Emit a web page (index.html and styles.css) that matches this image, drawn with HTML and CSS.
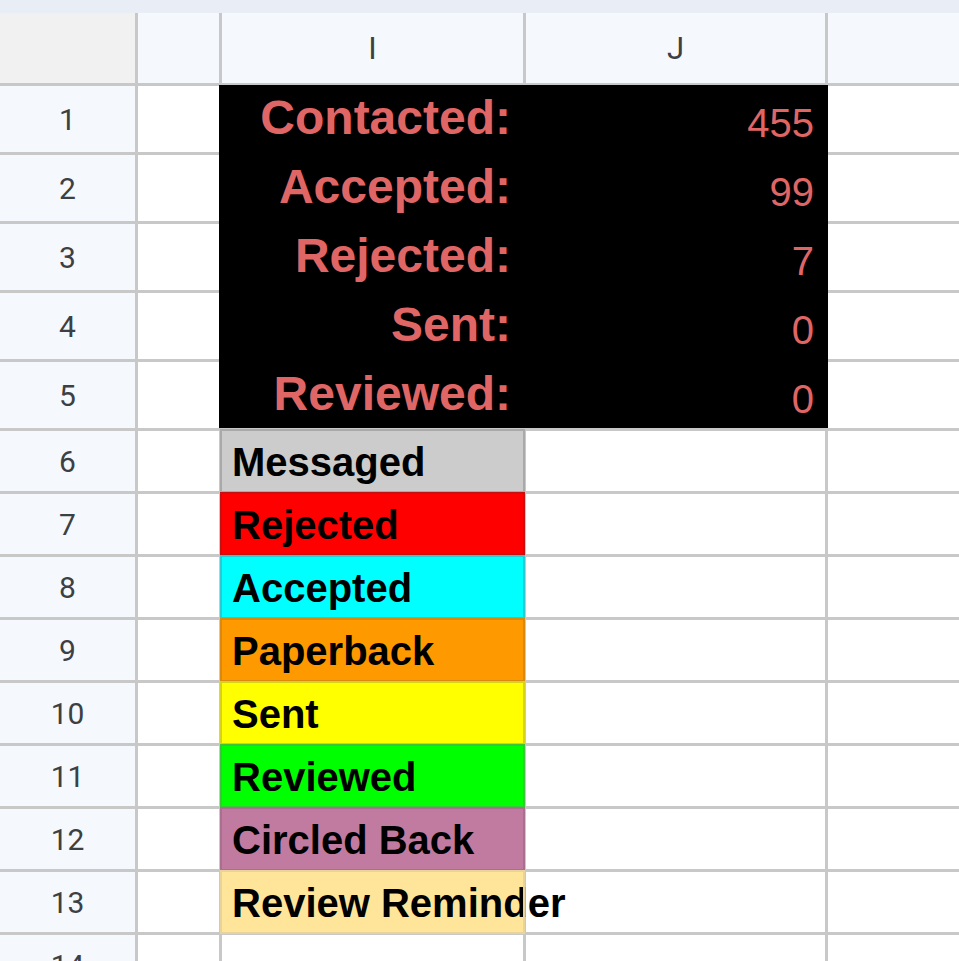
FILE: index.html
```html
<!DOCTYPE html>
<html>
<head>
<meta charset="utf-8">
<link rel="stylesheet" href="styles.css">
</head>
<body>
<div class="topbar"></div>
<div class="sheet">
  <div class="corner"></div>
  <div class="colhdr"></div>
  <div class="colhdr">I</div>
  <div class="colhdr">J</div>
  <div class="colhdr"></div>

  <div class="stats">
    <div class="label">Contacted:</div><div class="num">455</div>
    <div class="label">Accepted:</div><div class="num">99</div>
    <div class="label">Rejected:</div><div class="num">7</div>
    <div class="label">Sent:</div><div class="num">0</div>
    <div class="label">Reviewed:</div><div class="num">0</div>
  </div>

  <div class="rowhdr">1</div><div class="cell"></div><div class="cell"></div>
  <div class="rowhdr">2</div><div class="cell"></div><div class="cell"></div>
  <div class="rowhdr">3</div><div class="cell"></div><div class="cell"></div>
  <div class="rowhdr">4</div><div class="cell"></div><div class="cell"></div>
  <div class="rowhdr">5</div><div class="cell"></div><div class="cell"></div>

  <div class="rowhdr">6</div><div class="cell"></div><div class="tag tag-messaged">Messaged</div><div class="cell"></div><div class="cell"></div>
  <div class="rowhdr">7</div><div class="cell"></div><div class="tag tag-rejected">Rejected</div><div class="cell"></div><div class="cell"></div>
  <div class="rowhdr">8</div><div class="cell"></div><div class="tag tag-accepted">Accepted</div><div class="cell"></div><div class="cell"></div>
  <div class="rowhdr">9</div><div class="cell"></div><div class="tag tag-paperback">Paperback</div><div class="cell"></div><div class="cell"></div>
  <div class="rowhdr">10</div><div class="cell"></div><div class="tag tag-sent">Sent</div><div class="cell"></div><div class="cell"></div>
  <div class="rowhdr">11</div><div class="cell"></div><div class="tag tag-reviewed">Reviewed</div><div class="cell"></div><div class="cell"></div>
  <div class="rowhdr">12</div><div class="cell"></div><div class="tag tag-circled">Circled Back</div><div class="cell"></div><div class="cell"></div>
  <div class="rowhdr">13</div><div class="cell"></div><div class="tag tag-reminder">Review Reminder</div><div class="cell"></div><div class="cell"></div>
  <div class="rowhdr">14</div><div class="cell"></div><div class="cell"></div><div class="cell"></div><div class="cell"></div>
</div>
</body>
</html>
```

FILE: styles.css
```css
html, body {
  margin: 0;
  padding: 0;
  background: #ffffff;
  overflow: hidden;
}

.topbar {
  height: 13px;
  background: #e9eef6;
}

.sheet {
  display: grid;
  grid-template-columns: 135px 81px 301px 299px 1fr;
  grid-template-rows: 70px repeat(5, 66px) repeat(8, 60px) 60px;
  gap: 3px;
  background: #c8c8c8;
  height: 948px;
  overflow: hidden;
}

.corner {
  background: #f1f1f1;
}

.colhdr {
  background: #f5f8fc;
  display: flex;
  align-items: center;
  justify-content: center;
  font-family: Roboto, "Liberation Sans", sans-serif;
  font-size: 31px;
  color: #3c4043;
}

.rowhdr {
  grid-column: 1;
  background: #f5f8fc;
  display: flex;
  align-items: center;
  justify-content: center;
  font-family: Roboto, "Liberation Sans", sans-serif;
  font-size: 30px;
  color: #3c4043;
}

.cell {
  background: #ffffff;
}

.stats {
  grid-column: 3 / 5;
  grid-row: 2 / 7;
  margin: -1px -3px 0 -3px;
  padding: 1px 3px 0 3px;
  background: #000000;
  display: grid;
  grid-template-columns: 301px 299px;
  grid-template-rows: repeat(5, 66px);
  column-gap: 3px;
  row-gap: 3px;
  font-family: "Liberation Sans", Arial, sans-serif;
  color: #e06666;
}

.label {
  display: flex;
  align-items: flex-end;
  justify-content: flex-end;
  font-size: 48px;
  font-weight: bold;
  line-height: 1;
  padding: 0 12px 10px 0;
}

.num {
  display: flex;
  align-items: flex-end;
  justify-content: flex-end;
  font-size: 40px;
  line-height: 1;
  padding: 0 11px 9px 0;
}

.tag {
  grid-column: 3;
  position: relative;
  z-index: 1;
  display: flex;
  align-items: flex-end;
  font-family: "Liberation Sans", Arial, sans-serif;
  font-size: 40px;
  font-weight: bold;
  line-height: 1;
  color: #000000;
  padding: 0 0 9px 10px;
  white-space: nowrap;
  outline: 2px solid transparent;
}

.tag-messaged { background: #cccccc; outline-color: #a9a9a9; }
.tag-rejected { background: #ff0000; outline-color: #c81010; }
.tag-accepted { background: #00ffff; outline-color: #2ec8d0; }
.tag-paperback { background: #ff9900; outline-color: #d88a10; }
.tag-sent { background: #ffff00; outline-color: #d6d21a; }
.tag-reviewed { background: #00ff00; outline-color: #3cc43c; }
.tag-circled { background: #c27ba0; outline-color: #a8708e; }
.tag-reminder { background: #ffe599; outline-color: #e8d49a; }
```
